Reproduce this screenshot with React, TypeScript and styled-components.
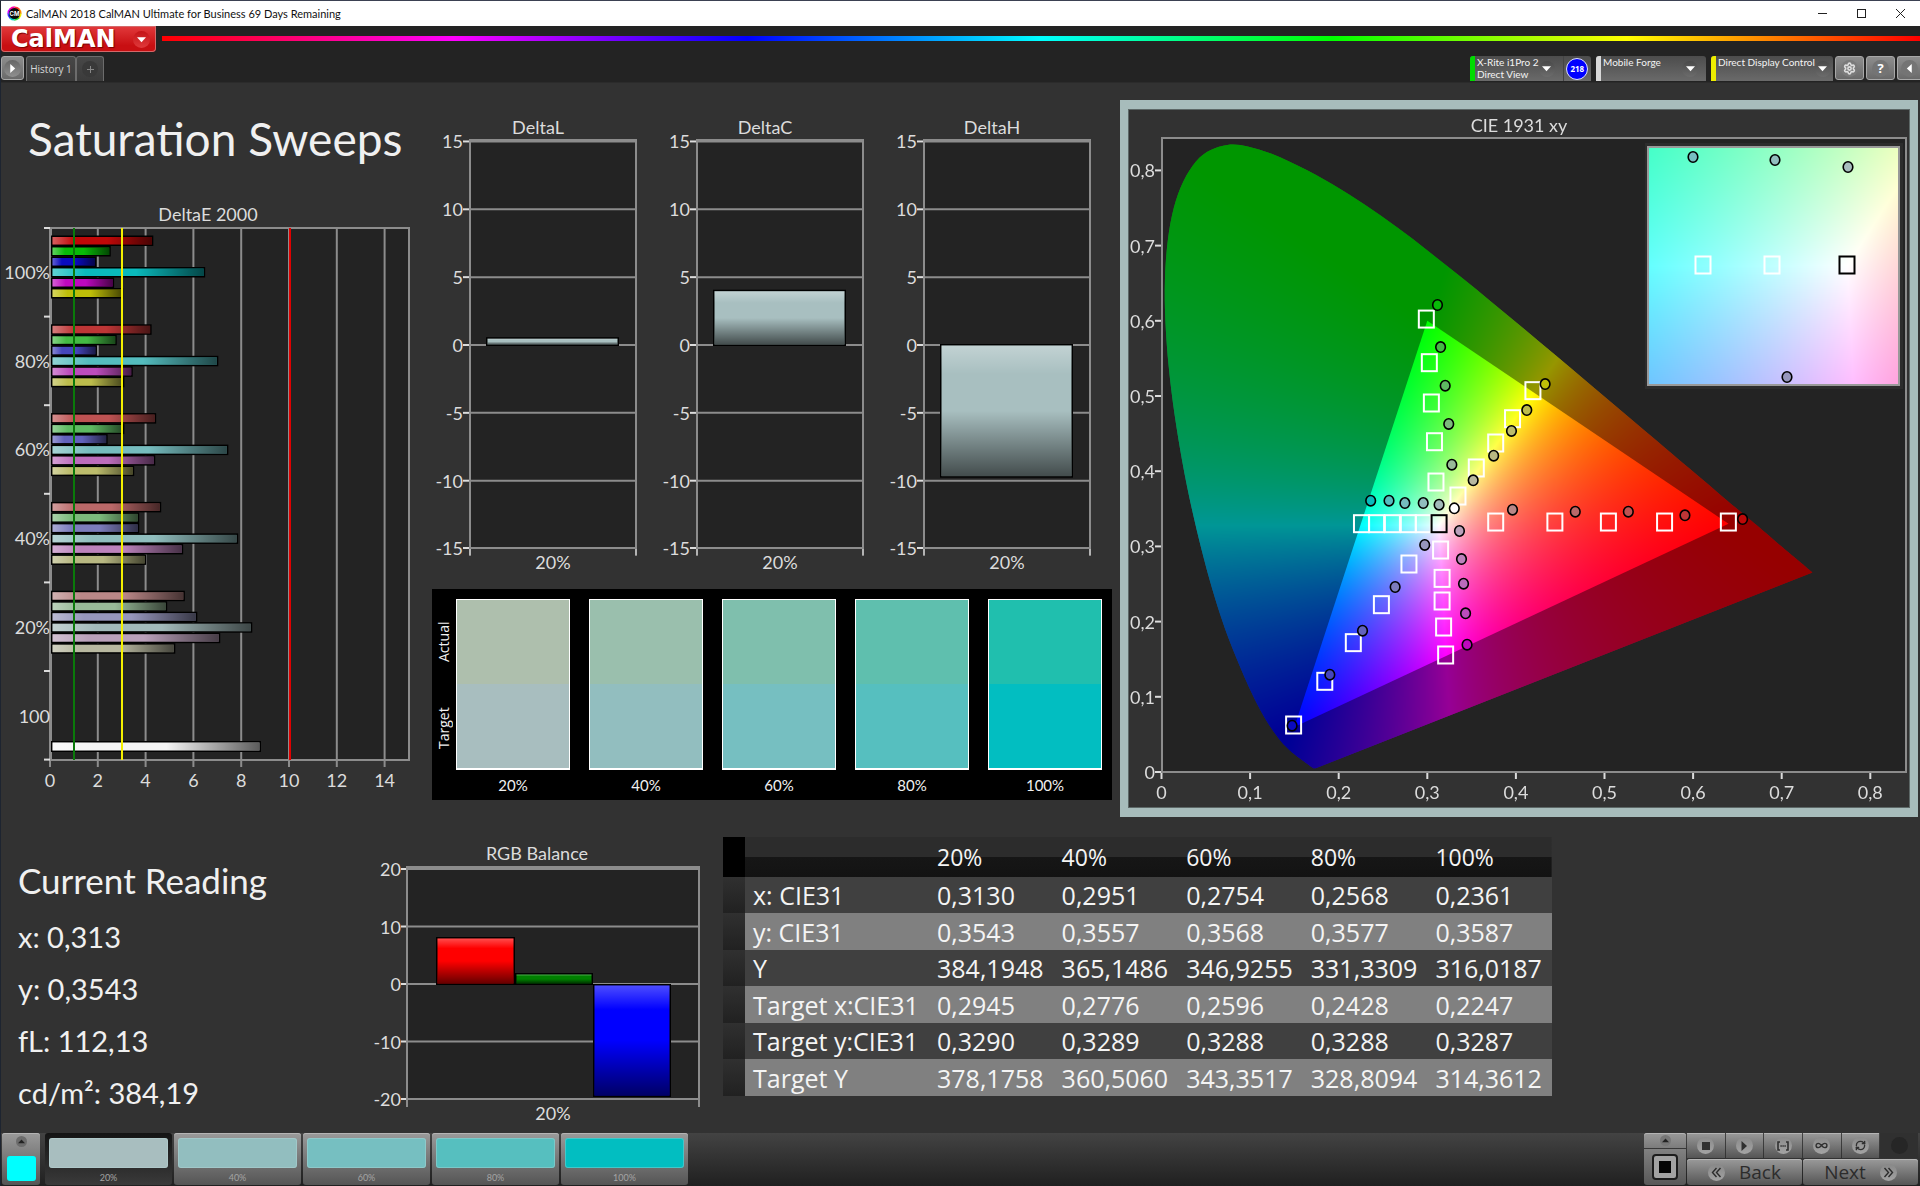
import React, { useLayoutEffect, useRef } from "react";
import styled, { createGlobalStyle, css } from "styled-components";
import { Infinity as InfinityIcon, RefreshCw, Settings } from "lucide-react";

/* ---------- shared values ---------- */

const chartFont = '"Lato", "Open Sans", sans-serif';
const uiFont = '"Open Sans", "Noto Sans", sans-serif';
const text = "#dcdcdc";
const line = "#8c8c8c";
const plotBg = "#232323";

const Global = createGlobalStyle`
  *, *::before, *::after { box-sizing: border-box; }
  body { margin: 0; background: #323232; color: #f0f0f0; font-family: ${chartFont}; }
  button { font-family: inherit; border: 0; padding: 0; margin: 0; color: inherit; cursor: pointer; }
  h1, h2, p { margin: 0; font-weight: 400; }
`;

const Page = styled.div`
  min-height: 100vh;
  display: flex;
  flex-direction: column;
  border-top: 1px solid #3b4152;
  border-left: 1px solid #1d2430;
  background: #323232;
`;

/* ---------- window title bar ---------- */

const TitleBar = styled.header`
  display: flex;
  align-items: center;
  height: 25px;
  padding: 0 8px 0 6px;
  background: #fff;
  color: #111;
  font: 11px/24px ${chartFont};
`;

const TitleText = styled.span`
  flex: 1;
  padding-left: 4px;
`;

const WindowButton = styled.button`
  display: grid;
  place-items: center;
  width: 39px;
  height: 24px;
  background: transparent;

  &:last-child {
    width: 24px;
    margin-left: 7px;
  }
`;

/* ---------- brand strip ---------- */

const BrandRow = styled.div`
  display: flex;
  height: 30px;
  background: #232323;
`;

const Brand = styled.button`
  display: flex;
  align-items: center;
  justify-content: space-between;
  width: 155px;
  height: 26px;
  padding: 0 6px 0 10px;
  border-radius: 0 0 4px 4px;
  background: linear-gradient(#e23a3c, #c80f12 75%);
  box-shadow: inset 0 0 0 1px #d4696a;
  color: #fff;
  font: 700 24px/24px "DejaVu Sans", sans-serif;
  text-shadow: 1px 1px 1px #7a0000;
`;

const Rainbow = styled.div`
  flex: 1;
  height: 5px;
  margin: 10px 0 0 6px;
  background: linear-gradient(
    90deg,
    #f00, #f0f 16.6%, #00f 33.3%, #0ff 50%, #0f0 66.6%, #ff0 83.3%, #f00
  );
`;

/* ---------- tab strip ---------- */

const TabRow = styled.nav`
  display: flex;
  align-items: flex-start;
  height: 26px;
  background: #232323;
  font: 10px/12px ${chartFont};
`;

const Spring = styled.div`
  flex: 1;
`;

const Round = styled.span<{ $size?: number; $tone?: string }>`
  display: grid;
  place-items: center;
  flex: none;
  width: ${(p) => p.$size ?? 17}px;
  height: ${(p) => p.$size ?? 17}px;
  border-radius: 50%;
  background: ${(p) => p.$tone ?? "linear-gradient(#555, #777)"};
`;

const SmallButton = styled.button<{ $w: number }>`
  display: grid;
  place-items: center;
  width: ${(p) => p.$w}px;
  height: 24px;
  margin-right: 2px;
  border: 1px solid #a8a8a8;
  border-radius: 3px;
  background: linear-gradient(#8d8d8d, #6a6a6a);

  &:last-child {
    margin-right: 0;
    border-right: 0;
    border-radius: 3px 0 0 3px;
  }
`;

const HistoryTab = styled.button<{ $w: number }>`
  display: grid;
  place-items: center;
  width: ${(p) => p.$w}px;
  height: 25px;
  border: 1px solid #6c6c6c;
  border-bottom: 0;
  border-radius: 3px 3px 0 0;
  background: linear-gradient(#474747, #3b3b3b);
  color: #d8d8d8;
  font: 10px/14px ${uiFont};
`;

const Device = styled.div<{ $w: number }>`
  display: flex;
  width: ${(p) => p.$w}px;
  height: 25px;
  margin-right: 5px;
  border-radius: 3px 3px 0 0;
  background: linear-gradient(#4c4c4c, #6a6a6a);
  overflow: hidden;

  &:nth-last-child(4) {
    margin-right: 2px;
  }
`;

const DeviceMenu = styled.button<{ $mark: string }>`
  flex: 1;
  display: flex;
  justify-content: space-between;
  align-items: center;
  padding: 0 8px 0 2px;
  border-left: 5px solid ${(p) => p.$mark};
  background: transparent;
  color: #f4f4f4;
  font: 10px/12px ${chartFont};
  text-align: left;
`;

const DeviceName = styled.span`
  align-self: flex-start;
  white-space: pre;
`;

const Badge = styled.div`
  display: grid;
  place-items: center;
  width: 30px;
  border-left: 1px solid #444;
  color: #fff;
  font: 700 8px/10px ${uiFont};
`;

const BadgeDot = styled.span`
  display: grid;
  place-items: center;
  width: 22px;
  height: 22px;
  border: 1px solid #dfe3ff;
  border-radius: 50%;
  background: #00f;
`;

/* ---------- workspace ---------- */

const Main = styled.main`
  flex: 1;
  display: flex;
  flex-direction: column;
  gap: 8px;
  border-top: 1px solid #2b2b2b;
`;

const TopRow = styled.div`
  display: grid;
  grid-template-columns: minmax(0, 430fr) minmax(0, 690fr) minmax(0, 800fr);
  align-items: start;
  margin-left: -1px;
`;

const BottomRow = styled.div`
  display: grid;
  grid-template-columns: minmax(0, 370fr) minmax(0, 340fr) minmax(0, 1210fr);
  align-items: start;
  margin-left: -1px;
`;

const Heading = styled.h1`
  height: 117px;
  padding: 20px 0 0 28px;
  font-size: 46px;
  line-height: 72px;
  white-space: nowrap;
`;

const Chart = styled.svg`
  display: block;
  width: 100%;
  height: auto;
  font-family: ${chartFont};
  font-size: 18px;
  fill: ${text};
`;

const DeltaRow = styled.div`
  display: grid;
  grid-template-columns: repeat(3, 1fr);
  padding: 27px 9px 0 0;
`;

/* ---------- swatch comparison ---------- */

const SwatchPanel = styled.section`
  display: grid;
  grid-template-columns: 24px 1fr;
  margin: 9px 8px 0 2px;
  padding: 10px 10px 0 0;
  background: #000;
`;

const SideLabels = styled.div`
  display: grid;
  grid-template-rows: 86px 86px;
  justify-items: center;
  font: 14px/18px ${uiFont};
`;

const SideLabel = styled.span`
  writing-mode: vertical-rl;
  transform: rotate(180deg);
  text-align: center;
`;

const Swatches = styled.div`
  display: grid;
  grid-template-columns: repeat(5, 1fr);
  column-gap: 19px;
`;

const Swatch = styled.figure`
  margin: 0;
  text-align: center;
`;

const SwatchColors = styled.div<{ $actual: string; $target: string }>`
  height: 171px;
  border: 1px solid #fff;
  border-bottom-width: 2px;
  background: linear-gradient(${(p) => p.$actual} 50%, ${(p) => p.$target} 50%);
`;

const SwatchName = styled.figcaption`
  font: 15px/30px ${chartFont};
  height: 30px;
`;

/* ---------- CIE panel ---------- */

const CiePanel = styled.section`
  display: grid;
  margin: 17px 2px 0 0;
  border: solid #a7bcbb;
  border-width: 9px 8px;
  background: #323232;

  > * {
    grid-area: 1 / 1;
  }
`;

const GamutCanvas = styled.canvas`
  display: block;
  width: 100%;
  height: auto;
`;

/* ---------- readings ---------- */

const Reading = styled.section`
  padding: 28px 0 0 18px;
  font-size: 29px;
  line-height: 52px;
  white-space: nowrap;
`;

const ReadingTitle = styled.h2`
  margin-bottom: 4px;
  font-size: 35px;
  line-height: 54px;
`;

const DataTable = styled.table`
  width: 829px;
  margin: 12px 0 0 13px;
  border-collapse: collapse;
  table-layout: fixed;
  font: 25px/30px ${uiFont};
  color: #f4f4f4;

  th,
  td {
    padding: 0 0 0 8px;
    font-weight: 400;
    text-align: left;
    white-space: nowrap;
  }
`;

const HeadRow = styled.tr`
  height: 40px;
  background: linear-gradient(#2c2c2c 50%, #161616 50%, #131313);
  font-size: 23px;

  td:first-child {
    background: #000;
  }
`;

const DataRow = styled.tr<{ $light: boolean }>`
  height: ${(p) => (p.$light ? 37 : 36)}px;
  background: ${(p) => (p.$light ? "#808080" : "#404040")};

  td:first-child {
    background: linear-gradient(#303030, #212121);
  }
`;

/* ---------- bottom bar ---------- */

const BottomBar = styled.footer`
  display: flex;
  align-items: stretch;
  height: 53px;
  padding: 0 2px 1px 1px;
  background: linear-gradient(#434343, #202020);
`;

const metal = css`
  background: linear-gradient(#9a9a9a, #555);
  box-shadow: inset 0 1px 0 #b4b4b4;
`;

const PatternButton = styled.button`
  ${metal}
  display: flex;
  flex-direction: column;
  align-items: center;
  width: 38px;
  margin-right: 5px;
  padding: 3px 0 4px;
  border-radius: 3px;
  justify-content: space-between;
`;

const PatternColor = styled.span`
  width: 29px;
  height: 25px;
  border-radius: 3px;
  background: #0ff;
`;

const LevelButton = styled.button<{ $on: boolean }>`
  ${metal}
  width: 127px;
  margin-right: 2px;
  padding: 5px 4px 0;
  border-radius: 3px;
  color: #a4a4a4;
  font: 9px/19px ${chartFont};
  ${(p) => p.$on && "background: linear-gradient(#141414, #3a3a3a); box-shadow: none;"}
`;

const LevelColor = styled.span<{ $c: string }>`
  display: block;
  height: 30px;
  border-radius: 3px;
  background: ${(p) => p.$c};
  box-shadow: inset 0 0 0 1px rgba(190, 220, 220, 0.35);
`;

const StopBlock = styled.div`
  display: flex;
  flex-direction: column;
  gap: 1px;
  width: 42px;
  margin-right: 1px;
`;

const StopMenu = styled.button`
  ${metal}
  display: grid;
  place-items: center;
  height: 15px;
  border-radius: 3px 3px 0 0;
  background: linear-gradient(#999, #7c7c7c);
`;

const StopButton = styled.button`
  display: grid;
  place-items: center;
  flex: 1;
  border-radius: 0 0 3px 3px;
  background: linear-gradient(#818181, #585858);
`;

const Transport = styled.div`
  display: grid;
  grid-template-columns: repeat(6, 1fr);
  grid-template-rows: 25px 26px;
  gap: 1px;
  width: 231px;
`;

const TransportButton = styled.button<{ $off?: boolean }>`
  ${metal}
  display: grid;
  place-items: center;
  color: #303030;
  ${(p) => p.$off && "background: #303030; box-shadow: none;"}
`;

const StepButton = styled.button`
  ${metal}
  grid-column: span 3;
  display: flex;
  align-items: center;
  justify-content: center;
  gap: 14px;
  border-radius: 3px;
  color: #2c2c2c;
  font: 500 19px/24px ${uiFont};
`;

/* ---------- data ---------- */

type RGB = [number, number, number];
const rgb = (c: RGB) => `rgb(${c.join(",")})`;

const levels = ["20%", "40%", "60%", "80%", "100%"];
const targets = ["#a8bebf", "#92bebf", "#76bfc1", "#56bfbf", "#02bec1"];
const actuals = ["#aebfad", "#9abfad", "#7fbfad", "#5fbfae", "#20bfae"];

const sweep: Record<string, RGB[]> = {
  red: [[192, 8, 8], [190, 54, 54], [190, 82, 82], [186, 104, 104], [185, 135, 135]],
  green: [[8, 186, 8], [68, 186, 68], [94, 186, 98], [124, 186, 124], [152, 186, 152]],
  blue: [[10, 10, 190], [70, 70, 188], [98, 98, 188], [124, 124, 188], [150, 150, 188]],
  cyan: [[10, 186, 188], [84, 188, 190], [118, 188, 190], [144, 190, 190], [162, 186, 186]],
  magenta: [[190, 8, 190], [188, 76, 188], [188, 108, 188], [188, 130, 188], [186, 160, 186]],
  yellow: [[190, 190, 8], [188, 188, 76], [188, 188, 108], [184, 184, 130], [184, 184, 160]],
};
const hues = ["red", "green", "blue", "cyan", "magenta", "yellow"];

/* DeltaE values, one list per saturation level from 100% down to 20% */
const deltaE = [
  [4.28, 2.5, 1.9, 6.45, 2.64, 3.02],
  [4.21, 2.75, 1.92, 7.0, 3.42, 3.07],
  [4.4, 3.07, 2.37, 7.42, 4.36, 3.48],
  [4.61, 3.69, 3.69, 7.83, 5.53, 3.98],
  [5.6, 4.86, 6.12, 8.42, 7.08, 5.2],
];

const tableRows: [string, string[]][] = [
  ["x: CIE31", ["0,3130", "0,2951", "0,2754", "0,2568", "0,2361"]],
  ["y: CIE31", ["0,3543", "0,3557", "0,3568", "0,3577", "0,3587"]],
  ["Y", ["384,1948", "365,1486", "346,9255", "331,3309", "316,0187"]],
  ["Target x:CIE31", ["0,2945", "0,2776", "0,2596", "0,2428", "0,2247"]],
  ["Target y:CIE31", ["0,3290", "0,3289", "0,3288", "0,3288", "0,3287"]],
  ["Target Y", ["378,1758", "360,5060", "343,3517", "328,8094", "314,3612"]],
];

type XY = [number, number];

const targetPoints: XY[] = [
  [0.2989, 0.6023], [0.3023, 0.5443], [0.3046, 0.4907], [0.3081, 0.4392], [0.3098, 0.3856],
  [0.4192, 0.5071], [0.3962, 0.4698], [0.3772, 0.4375], [0.3553, 0.4043], [0.3346, 0.367],
  [0.2257, 0.3302], [0.2428, 0.3302], [0.2606, 0.3302], [0.2786, 0.3302], [0.2955, 0.3302],
  [0.3772, 0.3324], [0.444, 0.3324], [0.5044, 0.3324], [0.5678, 0.3324], [0.6398, 0.3324],
  [0.315, 0.2952], [0.3167, 0.2575], [0.3167, 0.2274], [0.3184, 0.1928], [0.3207, 0.1556],
  [0.2793, 0.2766], [0.2482, 0.2225], [0.2165, 0.172], [0.1843, 0.1206], [0.1491, 0.0625],
];

/* measured points, from 100% down to 20% */
const actualPoints: Record<string, XY[]> = {
  green: [[0.3115, 0.621], [0.315, 0.5651], [0.3202, 0.5137], [0.3242, 0.4628], [0.3277, 0.4087]],
  yellow: [[0.433, 0.5159], [0.4123, 0.4813], [0.395, 0.4535], [0.3749, 0.4206], [0.3518, 0.3879]],
  cyan: [[0.2361, 0.3608], [0.2568, 0.3608], [0.2747, 0.3577], [0.2954, 0.3577], [0.3133, 0.3555]],
  magenta: [[0.3449, 0.1693], [0.3432, 0.211], [0.3409, 0.2504], [0.3386, 0.2832], [0.3363, 0.3205]],
  red: [[0.6559, 0.3364], [0.5908, 0.3413], [0.5269, 0.3462], [0.467, 0.3462], [0.3962, 0.3488]],
  blue: [[0.1474, 0.0616], [0.19, 0.1294], [0.2269, 0.1879], [0.2637, 0.246], [0.2971, 0.3019]],
};

const locus: XY[] = [
  [0.1741, 0.005], [0.1714, 0.0051], [0.1689, 0.0069], [0.1644, 0.0109], [0.1566, 0.0177],
  [0.151, 0.0227], [0.144, 0.0297], [0.1355, 0.0399], [0.1241, 0.0578], [0.1096, 0.0868],
  [0.0913, 0.1327], [0.0687, 0.2007], [0.0454, 0.295], [0.0235, 0.4127], [0.0082, 0.5384],
  [0.0039, 0.6548], [0.0139, 0.7502], [0.0389, 0.812], [0.0743, 0.8338], [0.1142, 0.8262],
  [0.1547, 0.8059], [0.1929, 0.7816], [0.2296, 0.7543], [0.2658, 0.7243], [0.3016, 0.6923],
  [0.3373, 0.6589], [0.3731, 0.6245], [0.4087, 0.5896], [0.4441, 0.5547], [0.4788, 0.5202],
  [0.5125, 0.4866], [0.5448, 0.4544], [0.5752, 0.4242], [0.6029, 0.3965], [0.627, 0.3725],
  [0.6482, 0.3514], [0.6658, 0.334], [0.6915, 0.3083], [0.7079, 0.292], [0.719, 0.2809],
  [0.726, 0.274], [0.7347, 0.2653],
];
const gamut: XY[] = [[0.64, 0.33], [0.3, 0.6], [0.15, 0.06]];

/* ---------- chart parts ---------- */

const Shades = () => (
  <defs>
    <linearGradient id="shadeX">
      <stop offset="0" stopColor="#fff" stopOpacity="0.35" />
      <stop offset="0.22" stopColor="#fff" stopOpacity="0" />
      <stop offset="0.55" stopColor="#000" stopOpacity="0" />
      <stop offset="1" stopColor="#000" stopOpacity="0.62" />
    </linearGradient>
    <linearGradient id="shadeY" x2="0" y2="1">
      <stop offset="0" stopColor="#fff" stopOpacity="0.3" />
      <stop offset="0.22" stopColor="#fff" stopOpacity="0" />
      <stop offset="0.5" stopColor="#000" stopOpacity="0" />
      <stop offset="1" stopColor="#000" stopOpacity="0.6" />
    </linearGradient>
  </defs>
);

type BarProps = { x: number; y: number; w: number; h: number; fill: string; shade: "X" | "Y" };
const Bar = ({ x, y, w, h, fill, shade }: BarProps) => (
  <g>
    <rect x={x} y={y} width={w} height={h} fill="#000" />
    <rect x={x + 1.5} y={y + 1.5} width={w - 3} height={h - 3} fill={fill} />
    <rect x={x + 1.5} y={y + 1.5} width={w - 3} height={h - 3} fill={`url(#shade${shade})`} />
  </g>
);

const DeltaEChart = () => {
  const x0 = 51;
  const unit = 23.9;
  const top = 228;
  const step = 88.6;
  return (
    <Chart viewBox="0 200 430 600" role="img" aria-label="DeltaE 2000">
      <Shades />
      <text x="208" y="221" textAnchor="middle">DeltaE 2000</text>
      <rect x={x0} y={top} width="358" height="532" fill={plotBg} />
      {[0, 2, 4, 6, 8, 10, 12, 14].map((v) => (
        <g key={v}>
          <line x1={x0 + v * unit - 1} x2={x0 + v * unit - 1} y1={top} y2="767" stroke={line} strokeWidth="2" />
          <text x={x0 + v * unit - 1} y="787" textAnchor="middle">{v}</text>
        </g>
      ))}
      {[0, 1, 2, 3, 4, 5, 6].map((i) => (
        <line key={i} x1="44" x2={x0} y1={top + i * step} y2={top + i * step} stroke={text} strokeWidth="2" />
      ))}
      <rect x={x0} y={top} width="358" height="532" fill="none" stroke={line} strokeWidth="2" />
      {["100%", "80%", "60%", "40%", "20%", "100"].map((t, i) => (
        <text key={i} x="50" y={279 + i * 88.7} textAnchor="end">{t}</text>
      ))}
      {deltaE.map((group, g) =>
        group.map((v, h) => (
          <Bar key={`${g}${h}`} x={x0} y={235.5 + g * 88.8 + h * 10.5} w={v * unit} h={10.5}
            fill={rgb(sweep[hues[h]][g])} shade="X" />
        ))
      )}
      <Bar x={x0} y={741} w={210} h={11} fill="#f4f4f4" shade="X" />
      <rect x="73" y={top} width="2" height="532" fill="#0a7a0a" />
      <rect x="121" y={top} width="2" height="532" fill="#f4f000" />
      <rect x="289" y={top} width="2" height="532" fill="#e00000" />
    </Chart>
  );
};

const DeltaChart = ({ title, from, to }: { title: string; from: number; to: number }) => {
  const y = (v: number) => 345 - v * 13.57;
  return (
    <Chart viewBox="0 110 227 470" role="img" aria-label={title}>
      <text x="108" y="134" textAnchor="middle">{title}</text>
      <rect x="40" y="140" width="166" height="408" fill={plotBg} />
      {[15, 10, 5, 0, -5, -10, -15].map((v) => {
        const ly = Math.min(y(v), 548);
        return (
          <g key={v}>
            <line x1="33" x2="40" y1={ly} y2={ly} stroke={text} strokeWidth="2" />
            <line x1="40" x2="206" y1={ly} y2={ly} stroke={line} strokeWidth="2" />
            <text x="33" y={ly + 7} textAnchor="end">{v}</text>
          </g>
        );
      })}
      <path d="M40 555V140H206V555" fill="none" stroke={line} strokeWidth="2" />
      <path d="M40 549v7M206 549v7" stroke={text} strokeWidth="1" />
      <Bar x={56} y={y(to) - 1} w={133} h={y(from) - y(to) + 2} fill="#a8bfc0" shade="Y" />
      <text x="123" y="569" textAnchor="middle">20%</text>
    </Chart>
  );
};

const RgbChart = () => {
  const y = (v: number) => 984 - v * 5.75;
  return (
    <Chart viewBox="370 840 340 285" role="img" aria-label="RGB Balance">
      <text x="537" y="860" textAnchor="middle">RGB Balance</text>
      <rect x="407" y="867" width="292" height="232" fill={plotBg} />
      {[20, 10, 0, -10, -20].map((v) => (
        <g key={v}>
          <line x1="401" x2="407" y1={y(v)} y2={y(v)} stroke={text} strokeWidth="2" />
          <line x1="407" x2="699" y1={y(v)} y2={y(v)} stroke={line} strokeWidth="2" />
          <text x="401" y={y(v) + 7} textAnchor="end">{v}</text>
        </g>
      ))}
      <path d="M407 1107V867H699V1107" fill="none" stroke={line} strokeWidth="2" />
      <Bar x={436} y={937} w={79} h={48} fill="#f00" shade="Y" />
      <Bar x={515} y={973} w={78} h={12} fill="#008000" shade="Y" />
      <Bar x={593} y={984} w={78} h={113} fill="#00f" shade="Y" />
      <text x="553" y="1120" textAnchor="middle">20%</text>
    </Chart>
  );
};

/* Chromaticity diagram: colours are computed per pixel and clipped to the locus. */

const CIE_W = 782;
const CIE_H = 699;
const cx = (x: number) => 33.5 + x * 886;
const cy = (y: number) => 663 - y * 752;
const inset = { x: 521, y: 38, w: 250, h: 238 };

function xyColor(x: number, y: number): RGB {
  const X = x / y;
  const Z = (1 - x - y) / y;
  const lin = [
    3.2406 * X - 1.5372 - 0.4986 * Z,
    -0.9689 * X + 1.8758 + 0.0415 * Z,
    0.0557 * X - 0.204 + 1.057 * Z,
  ].map((v) => Math.max(0, v));
  const top = Math.max(...lin);
  return lin.map((v) => Math.round((255 * v) / top)) as RGB;
}

function paint(w: number, h: number, at: (px: number, py: number) => XY) {
  const c = document.createElement("canvas");
  c.width = w;
  c.height = h;
  const g = c.getContext("2d")!;
  const img = g.createImageData(w, h);
  for (let j = 0; j < h; j++) {
    for (let i = 0; i < w; i++) {
      const [x, y] = at(i, j);
      const col = xyColor(x, Math.max(0.002, y));
      img.data.set([...col, 255], (j * w + i) * 4);
    }
  }
  g.putImageData(img, 0, 0);
  return c;
}

function drawGamut(canvas: HTMLCanvasElement) {
  const g = canvas.getContext("2d")!;
  const traceStraight = (pts: XY[]) => {
    g.beginPath();
    pts.forEach(([x, y]) => g.lineTo(cx(x), cy(y)));
    g.closePath();
  };
  /* Catmull-Rom spline through the samples, closed by the straight purple line */
  const traceSmooth = (pts: XY[]) => {
    const at = (i: number): XY => {
      const [x, y] = pts[Math.min(pts.length - 1, Math.max(0, i))];
      return [cx(x), cy(y)];
    };
    g.beginPath();
    g.moveTo(...at(0));
    for (let i = 0; i < pts.length - 1; i++) {
      const [a, b, c, d] = [at(i - 1), at(i), at(i + 1), at(i + 2)];
      g.bezierCurveTo(
        b[0] + (c[0] - a[0]) / 6, b[1] + (c[1] - a[1]) / 6,
        c[0] - (d[0] - b[0]) / 6, c[1] - (d[1] - b[1]) / 6,
        c[0], c[1]
      );
    }
    g.closePath();
  };
  const field = paint(CIE_W, CIE_H, (i, j) => [(i - 33.5) / 886, (663 - j) / 752]);
  g.fillStyle = plotBg;
  g.fillRect(34, 29, 744, 634);
  g.save();
  traceSmooth(locus);
  g.clip();
  g.drawImage(field, 0, 0);
  g.fillStyle = "rgba(0,0,0,0.41)";
  g.fillRect(0, 0, CIE_W, CIE_H);
  g.restore();
  g.save();
  traceStraight(gamut);
  g.clip();
  g.drawImage(field, 0, 0);
  g.restore();
  g.fillStyle = "#2c2c2c";
  g.fillRect(inset.x - 4, inset.y - 4, inset.w + 8, inset.h + 8);
  g.drawImage(
    paint(inset.w, inset.h, (i, j) => [0.3127 + (i - 198) / 4110, 0.329 - (j - 118) / 3900]),
    inset.x,
    inset.y
  );
}

const Square = ({ x, y, dark }: { x: number; y: number; dark?: boolean }) => (
  <rect x={x - 7.5} y={y - 8.5} width="15" height="17" fill="none" stroke={dark ? "#000" : "#fff"} strokeWidth="2" />
);
const Dot = ({ x, y, fill }: { x: number; y: number; fill: string }) => (
  <ellipse cx={x} cy={y} rx="4.8" ry="5.2" fill={fill} stroke="#000" strokeWidth="1.6" />
);

const CieChart = () => {
  const ref = useRef<HTMLCanvasElement>(null);
  useLayoutEffect(() => {
    if (ref.current) drawGamut(ref.current);
  }, []);
  const ticks = [0, 1, 2, 3, 4, 5, 6, 7, 8];
  const label = (n: number) => (n ? `0,${n}` : "0");
  return (
    <CiePanel>
      <GamutCanvas ref={ref} width={CIE_W} height={CIE_H} />
      <Chart viewBox={`0 0 ${CIE_W} ${CIE_H}`} role="img" aria-label="CIE 1931 xy">
        <path d="M0 0H782V699H0Z" fill="none" stroke="#5d6867" strokeWidth="2" />
        <text x="391" y="23" textAnchor="middle">CIE 1931 xy</text>
        <rect x="34" y="29" width="744" height="634" fill="none" stroke={line} strokeWidth="2" />
        {ticks.map((n) => (
          <g key={n}>
            <line x1={cx(n / 10)} x2={cx(n / 10)} y1="664" y2="670" stroke={text} strokeWidth="2" />
            <text x={cx(n / 10)} y="690" textAnchor="middle">{label(n)}</text>
            <line x1="27" x2="33" y1={cy(n / 10)} y2={cy(n / 10)} stroke={text} strokeWidth="2" />
            <text x="27" y={cy(n / 10) + 7} textAnchor="end">{label(n)}</text>
          </g>
        ))}
        {targetPoints.map(([x, y], i) => (
          <Square key={i} x={cx(x)} y={cy(y)} />
        ))}
        {hues.map((h) =>
          actualPoints[h].map(([x, y], i) => (
            <Dot key={h + i} x={cx(x)} y={cy(y)} fill={rgb(sweep[h][i])} />
          ))
        )}
        <Dot x={cx(0.3305)} y={cy(0.3506)} fill="#fff" />
        <Square x={cx(0.3133)} y={cy(0.3302)} dark />
        <rect x={inset.x - 1} y={inset.y} width={inset.w + 1} height={inset.h} fill="none" stroke="#999" strokeWidth="2" />
        <Square x={575} y={156} />
        <Square x={644} y={156} />
        <Square x={719} y={156} dark />
        <Dot x={565} y={48} fill={targets[2]} />
        <Dot x={647} y={51} fill={targets[1]} />
        <Dot x={720} y={58} fill={targets[0]} />
        <Dot x={659} y={268} fill="rgb(150,150,188)" />
      </Chart>
    </CiePanel>
  );
};

/* ---------- small glyphs ---------- */

const Triangle = ({ dir, color = "#fff", size = 9 }: { dir: number; color?: string; size?: number }) => (
  <svg width={size} height={size} viewBox="0 0 10 10" aria-hidden="true">
    <path d="M0 2.5H10L5 8Z" fill={color} transform={`rotate(${dir} 5 5)`} />
  </svg>
);

const AppIcon = () => (
  <svg width="15" height="15" viewBox="0 0 15 15" aria-hidden="true">
    {["#f33", "#f80", "#ee0", "#3d3", "#0cc", "#33f", "#c0f", "#f0a"].map((c, i) => (
      <path key={c} d="M7.5 7.5L7.5 0.4A7.1 7.1 0 0 1 12.7 2.6Z" fill={c} transform={`rotate(${i * 45} 7.5 7.5)`} />
    ))}
    <circle cx="7.5" cy="7.5" r="5.6" fill="#0a0a0a" />
    <text x="7.5" y="9.6" fontSize="6" fontWeight="700" fill="#fff" textAnchor="middle" fontFamily="Inter, sans-serif">CM</text>
  </svg>
);

const Chevrons = ({ left }: { left?: boolean }) => (
  <Round $tone="linear-gradient(#888, #a2a2a2)">
    <svg width="11" height="11" viewBox="0 0 11 11" fill="none" stroke="#2c2c2c" strokeWidth="1.4" aria-hidden="true">
      <path d={left ? "M5.5 1L1.5 5.5L5.5 10M9.5 1L5.5 5.5L9.5 10" : "M1.5 1L5.5 5.5L1.5 10M5.5 1L9.5 5.5L5.5 10"} />
    </svg>
  </Round>
);

const DropRound = () => (
  <Round $size={16} $tone="linear-gradient(#4a4a4a, #6c6c6c)">
    <Triangle dir={0} />
  </Round>
);

const lightRound = "linear-gradient(#8a8a8a, #a4a4a4)";

const HelpMark = styled.span`
  color: #fff;
  font: 700 13px/16px ${uiFont};
`;

const RgbPlace = styled.div`
  padding-top: 15px;
`;

/* ---------- page ---------- */

export default function App() {
  return (
    <Page>
      <Global />
      <TitleBar>
        <AppIcon />
        <TitleText>CalMAN 2018 CalMAN Ultimate for Business 69 Days Remaining</TitleText>
        <WindowButton aria-label="Minimize">
          <svg width="9" height="9"><path d="M0 4.5H9" stroke="#222" /></svg>
        </WindowButton>
        <WindowButton aria-label="Maximize">
          <svg width="9" height="9"><rect x="0.5" y="0.5" width="8" height="8" fill="none" stroke="#222" /></svg>
        </WindowButton>
        <WindowButton aria-label="Close">
          <svg width="9" height="9"><path d="M0 0L9 9M9 0L0 9" stroke="#222" /></svg>
        </WindowButton>
      </TitleBar>

      <BrandRow>
        <Brand>
          CalMAN
          <Round $tone="linear-gradient(#c41417, #e0393b)"><Triangle dir={0} /></Round>
        </Brand>
        <Rainbow />
      </BrandRow>

      <TabRow>
        <SmallButton $w={23} aria-label="Show panel">
          <Round $tone="linear-gradient(#666, #909090)"><Triangle dir={-90} /></Round>
        </SmallButton>
        <HistoryTab $w={50}>History 1</HistoryTab>
        <HistoryTab $w={28} aria-label="Add tab">
          <Round $size={16} $tone="#393939">
            <svg width="7" height="7"><path d="M3.5 0V7M0 3.5H7" stroke="#888" /></svg>
          </Round>
        </HistoryTab>
        <Spring />
        <Device $w={121}>
          <DeviceMenu $mark="#00dc00">
            <DeviceName>{"X-Rite i1Pro 2\nDirect View"}</DeviceName>
            <DropRound />
          </DeviceMenu>
          <Badge><BadgeDot>218</BadgeDot></Badge>
        </Device>
        <Device $w={110}>
          <DeviceMenu $mark="#d8d8d8">
            <DeviceName>Mobile Forge</DeviceName>
            <DropRound />
          </DeviceMenu>
        </Device>
        <Device $w={122}>
          <DeviceMenu $mark="#eded00">
            <DeviceName>Direct Display Control</DeviceName>
            <DropRound />
          </DeviceMenu>
        </Device>
        <SmallButton $w={29} aria-label="Settings">
          <Round $tone="#7a7a7a"><Settings size={13} color="#ddd" strokeWidth={3} /></Round>
        </SmallButton>
        <SmallButton $w={29} aria-label="Help">
          <Round $tone="#747474"><HelpMark>?</HelpMark></Round>
        </SmallButton>
        <SmallButton $w={23} aria-label="Collapse">
          <Round $tone="#747474"><Triangle dir={90} /></Round>
        </SmallButton>
      </TabRow>

      <Main>
        <TopRow>
          <div>
            <Heading>Saturation Sweeps</Heading>
            <DeltaEChart />
          </div>
          <div>
            <DeltaRow>
              <DeltaChart title="DeltaL" from={0} to={0.5} />
              <DeltaChart title="DeltaC" from={0} to={4} />
              <DeltaChart title="DeltaH" from={-9.7} to={0} />
            </DeltaRow>
            <SwatchPanel>
              <SideLabels>
                <SideLabel>Actual</SideLabel>
                <SideLabel>Target</SideLabel>
              </SideLabels>
              <Swatches>
                {levels.map((l, i) => (
                  <Swatch key={l}>
                    <SwatchColors $actual={actuals[i]} $target={targets[i]} />
                    <SwatchName>{l}</SwatchName>
                  </Swatch>
                ))}
              </Swatches>
            </SwatchPanel>
          </div>
          <CieChart />
        </TopRow>

        <BottomRow>
          <Reading>
            <ReadingTitle>Current Reading</ReadingTitle>
            <p>x: 0,313</p>
            <p>y: 0,3543</p>
            <p>fL: 112,13</p>
            <p>cd/m²: 384,19</p>
          </Reading>
          <RgbPlace>
            <RgbChart />
          </RgbPlace>
          <DataTable>
            <colgroup>
              <col width="22" />
              <col width="184" />
              {levels.map((l) => <col key={l} />)}
            </colgroup>
            <thead>
              <HeadRow>
                <td />
                <td />
                {levels.map((l) => <th key={l} scope="col">{l}</th>)}
              </HeadRow>
            </thead>
            <tbody>
              {tableRows.map(([name, values], i) => (
                <DataRow key={name} $light={i % 2 === 1}>
                  <td />
                  <th scope="row">{name}</th>
                  {values.map((v, k) => <td key={k}>{v}</td>)}
                </DataRow>
              ))}
            </tbody>
          </DataTable>
        </BottomRow>
      </Main>

      <BottomBar>
        <PatternButton aria-label="Pattern colour">
          <Round $size={11} $tone="#6c6c6c"><Triangle dir={180} color="#222" size={7} /></Round>
          <PatternColor />
        </PatternButton>
        {levels.map((l, i) => (
          <LevelButton key={l} $on={i === 0}>
            <LevelColor $c={targets[i]} />
            {l}
          </LevelButton>
        ))}
        <Spring />
        <StopBlock>
          <StopMenu aria-label="Stop options">
            <Round $size={11} $tone="#777"><Triangle dir={180} color="#222" size={7} /></Round>
          </StopMenu>
          <StopButton aria-label="Stop reading">
            <svg width="28" height="28">
              <rect x="2" y="2" width="24" height="24" rx="3" fill="#a2a2a2" stroke="#1c1c1c" strokeWidth="2" />
              <rect x="8" y="8" width="12" height="12" fill="#050505" />
            </svg>
          </StopButton>
        </StopBlock>
        <Transport>
          <TransportButton aria-label="Stop">
            <Round $tone={lightRound}><svg width="8" height="8"><rect width="8" height="8" fill="#303030" /></svg></Round>
          </TransportButton>
          <TransportButton aria-label="Play">
            <Round $tone={lightRound}><Triangle dir={-90} color="#303030" size={10} /></Round>
          </TransportButton>
          <TransportButton aria-label="Read range">
            <Round $tone={lightRound}>
              <svg width="12" height="10" viewBox="0 0 12 10" fill="none" stroke="#303030" strokeWidth="1.6">
                <path d="M3 1H1V9H3M9 1H11V9H9" />
                <path d="M3.4 5H8.8" strokeDasharray="1.4 0.6" />
              </svg>
            </Round>
          </TransportButton>
          <TransportButton aria-label="Continuous">
            <Round $tone={lightRound}><InfinityIcon size={13} strokeWidth={2.6} /></Round>
          </TransportButton>
          <TransportButton aria-label="Refresh">
            <Round $tone={lightRound}><RefreshCw size={11} strokeWidth={3} /></Round>
          </TransportButton>
          <TransportButton $off aria-label="Unavailable">
            <Round $tone="#262626" />
          </TransportButton>
          <StepButton><Chevrons left />Back</StepButton>
          <StepButton>Next<Chevrons /></StepButton>
        </Transport>
      </BottomBar>
    </Page>
  );
}
